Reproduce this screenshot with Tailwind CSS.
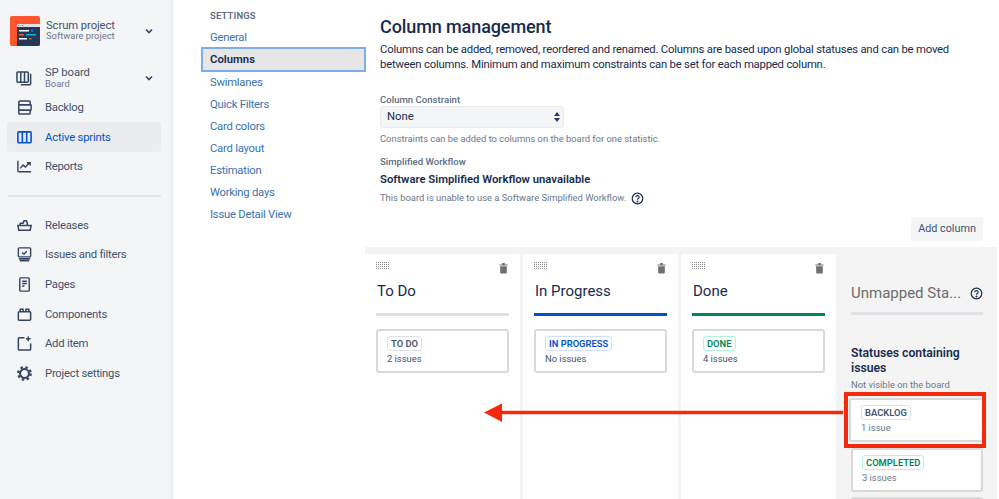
<!DOCTYPE html>
<html><head><meta charset="utf-8"><script src="https://cdn.jsdelivr.net/npm/@tailwindcss/browser@4"></script></head>
<body class="m-0 bg-white">
<div class="relative flex w-[999px] h-[499px] overflow-hidden bg-white font-['Roboto',sans-serif] text-[#172b4d] antialiased">
  <aside class="w-[173px] shrink-0 bg-[#f4f5f7] border-r-2 border-[#ebecf0] flex flex-col pl-[7px] pr-[10px]">
    <div class="flex items-center h-[31px] mt-[15px] pl-[3px]">
      <svg class="w-[30px] h-[30px] shrink-0 rounded-[2px]" viewBox="0 0 30 30"><rect width="30" height="30" fill="#ff5630"/><rect x="7" y="8" width="23" height="22" fill="#253858"/><rect x="7" y="8" width="23" height="3" fill="#dfe1e6"/><rect x="8" y="9" width="1.5" height="1" fill="#ff5630"/><rect x="10" y="9" width="1.5" height="1" fill="#ffc400"/><rect x="12" y="9" width="1.5" height="1" fill="#00b8d9"/><rect x="9" y="14" width="10" height="1.5" fill="#fff"/><rect x="21" y="14" width="2" height="1.5" fill="#2684ff"/><rect x="9" y="18" width="5" height="1.5" fill="#ff5630"/><rect x="16" y="18" width="10" height="1.5" fill="#00b8d9"/><rect x="9" y="22" width="8" height="1.5" fill="#fff"/><rect x="19" y="22" width="2.5" height="1.5" fill="#ff5630"/></svg>
      <div class="ml-[6px] flex-1"><div class="text-[11.3px] tracking-[-0.1px] leading-[11.5px] text-[#42526e]">Scrum project</div><div class="text-[9.4px] leading-[10px] text-[#6b778c]">Software project</div></div>
      <svg class="w-[10px] h-[10px] mr-[7px]" viewBox="0 0 10 10" fill="none" stroke="#344563" stroke-width="1.6"><path d="M2 3.5l3 3 3-3"/></svg>
    </div>
    <div class="flex items-center h-[28px] mt-[18px] pl-[9px]">
      <svg class="w-[17px] h-[17px] shrink-0" viewBox="0 0 18 18" fill="none" stroke="#344563" stroke-width="1.6"><rect x="1" y="2" width="12" height="11" rx="1"/><path d="M5 2v11M9 2v11M15.5 4v10.5a1 1 0 0 1-1 1H5"/></svg>
      <div class="ml-[12px] flex-1"><div class="text-[11.3px] tracking-[-0.1px] leading-[12px] text-[#42526e]">SP board</div><div class="text-[9.4px] leading-[10px] text-[#6b778c]">Board</div></div>
      <svg class="w-[10px] h-[10px] mr-[7px]" viewBox="0 0 10 10" fill="none" stroke="#344563" stroke-width="1.6"><path d="M2 3.5l3 3 3-3"/></svg>
    </div>
    <a class="flex items-center h-[30px] pl-[9px] text-[11.3px] tracking-[-0.25px] text-[#42526e]"><svg class="w-[17px] h-[17px] shrink-0 mr-[12px]" viewBox="0 0 18 18" fill="none" stroke="#344563" stroke-width="1.6"><rect x="3" y="2" width="12" height="4" rx="1"/><rect x="3" y="12" width="12" height="4" rx="1"/><path d="M3 6h12.5a.5.5 0 0 1 .5.5v5a.5.5 0 0 1-.5.5H3z"/></svg><span class="pt-[2px]">Backlog</span></a>
    <a class="flex items-center h-[30px] pl-[9px] text-[11.3px] tracking-[-0.2px] text-[#0052cc] bg-[#ebecf0] rounded-[3px]"><svg class="w-[17px] h-[17px] shrink-0 mr-[12px]" viewBox="0 0 18 18" fill="none" stroke="#0052cc" stroke-width="1.7"><rect x="2" y="3" width="14" height="11.5" rx="1"/><path d="M6.7 3v11.5M11.3 3v11.5"/></svg><span class="pt-[2px]">Active sprints</span></a>
    <a class="flex items-center h-[29px] pl-[9px] text-[11.3px] tracking-[-0.25px] text-[#42526e]"><svg class="w-[17px] h-[17px] shrink-0 mr-[12px]" viewBox="0 0 18 18" fill="none" stroke="#344563" stroke-width="1.5"><path d="M2 3v10.5a1 1 0 0 0 1 1h13"/><path d="M4.5 11l3-3.5 2.5 2 4.5-4.5M11.5 5H15v3"/></svg><span class="pt-[2px]">Reports</span></a>
    <div class="h-[2px] bg-[#e4e6eb] mt-[14px] mb-[13.5px] ml-[1px]"></div>
    <a class="flex items-center h-[29.6px] pl-[9px] text-[11.3px] tracking-[-0.25px] text-[#42526e]"><svg class="w-[17px] h-[17px] shrink-0 mr-[12px]" viewBox="0 0 18 18" fill="none" stroke="#344563" stroke-width="1.6"><path d="M2 9h14l-1 5H3zM4.5 9V6.5h3L8.5 4H11l1 2.5v2.5"/></svg><span class="pt-[2px]">Releases</span></a>
    <a class="flex items-center h-[29.6px] pl-[9px] text-[11.3px] tracking-[-0.25px] text-[#42526e]"><svg class="w-[17px] h-[17px] shrink-0 mr-[12px]" viewBox="0 0 18 18" fill="none" stroke="#344563" stroke-width="1.5"><rect x="2.5" y="2" width="13" height="9.5" rx="1"/><path d="M6.5 7l2 1.5 3-3"/><path d="M3 13.5h12M4 15.5h10" stroke-width="1.7"/></svg><span class="pt-[2px]">Issues and filters</span></a>
    <a class="flex items-center h-[29.6px] pl-[9px] text-[11.3px] tracking-[-0.25px] text-[#42526e]"><svg class="w-[17px] h-[17px] shrink-0 mr-[12px]" viewBox="0 0 18 18" fill="none" stroke="#344563" stroke-width="1.5"><rect x="4" y="2" width="10" height="14" rx="1"/><path d="M6.5 5.5h5M6.5 8h5M6.5 10.5h2.5"/></svg><span class="pt-[2px]">Pages</span></a>
    <a class="flex items-center h-[29.6px] pl-[9px] text-[11.3px] tracking-[-0.25px] text-[#42526e]"><svg class="w-[17px] h-[17px] shrink-0 mr-[12px]" viewBox="0 0 18 18" fill="none" stroke="#344563" stroke-width="1.6"><rect x="2.5" y="6" width="13" height="9" rx="1"/><path d="M4.5 6V3.5h3V6M10.5 6V3.5h3V6"/></svg><span class="pt-[2px]">Components</span></a>
    <a class="flex items-center h-[29.6px] pl-[9px] text-[11.3px] tracking-[-0.25px] text-[#42526e]"><svg class="w-[17px] h-[17px] shrink-0 mr-[12px]" viewBox="0 0 18 18" fill="none" stroke="#344563" stroke-width="1.6"><path d="M9 3H3.5a1 1 0 0 0-1 1v11a1 1 0 0 0 1 1h11a1 1 0 0 0 1-1V9"/><path d="M13 1.5v5M10.5 4h5"/></svg><span class="pt-[2px]">Add item</span></a>
    <a class="flex items-center h-[29.6px] pl-[9px] text-[11.3px] tracking-[-0.25px] text-[#42526e]"><svg class="w-[17px] h-[17px] shrink-0 mr-[12px]" viewBox="0 0 18 18" fill="none" stroke="#344563"><circle cx="9" cy="9" r="4.7" stroke-width="2.2"/><circle cx="9" cy="9" r="6.6" stroke-width="2.4" stroke-dasharray="2.6 2.6"/></svg><span class="pt-[2px]">Project settings</span></a>
  </aside>

  <nav class="w-[192px] shrink-0 pl-[37px] pt-[10px] text-[11.3px]">
    <div class="text-[9.4px] font-semibold tracking-[0.2px] text-[#5e6c84] leading-[12px]">SETTINGS</div>
    <a class="block text-[#3b73af] tracking-[-0.25px] h-[22px] leading-[24px] mt-[4px]">General</a>
    <a class="block font-semibold text-[#172b4d] bg-[#e6e6e6] border-2 border-[#7daee8] h-[25px] leading-[21px] -ml-[9px] pl-[7px] w-[165px] -my-[1px]">Columns</a>
    <a class="block text-[#3b73af] tracking-[-0.25px] h-[22px] leading-[23px]">Swimlanes</a>
    <a class="block text-[#3b73af] tracking-[-0.25px] h-[22px] leading-[23px]">Quick Filters</a>
    <a class="block text-[#3b73af] tracking-[-0.25px] h-[22px] leading-[24px]">Card colors</a>
    <a class="block text-[#3b73af] tracking-[-0.25px] h-[22px] leading-[24px]">Card layout</a>
    <a class="block text-[#3b73af] tracking-[-0.25px] h-[22px] leading-[24px]">Estimation</a>
    <a class="block text-[#3b73af] tracking-[-0.25px] h-[22px] leading-[24px]">Working days</a>
    <a class="block text-[#3b73af] tracking-[-0.25px] h-[22px] leading-[24px]">Issue Detail View</a>
  </nav>

  <main class="w-[632px] shrink-0 flex flex-col">
    <div class="pl-[15px] pr-[14px] pt-[15px] h-[247px] shrink-0">
      <h1 class="text-[18px] tracking-[-0.1px] leading-[24px] font-medium text-[#172b4d]">Column management</h1>
      <p class="text-[11.3px] tracking-[-0.2px] leading-[15px] mt-[3px] text-[#172b4d] w-[590px]">Columns can be added, removed, reordered and renamed. Columns are based upon global statuses and can be moved between columns. Minimum and maximum constraints can be set for each mapped column.</p>
      <div class="text-[9.6px] leading-[12px] font-medium text-[#5e6c84] mt-[22px]">Column Constraint</div>
      <div class="flex items-center justify-between w-[184px] h-[22px] bg-[#f4f5f7] border border-[#ebecf0] rounded-[3px] pl-[6px] pr-[2px] text-[11.3px]">None<svg class="w-[8px] h-[12px]" viewBox="0 0 8 12" fill="#253858"><path d="M4 1l3 4H1zM4 11l3-4H1z"/></svg></div>
      <div class="text-[9.4px] leading-[12px] text-[#6b778c] mt-[5px]">Constraints can be added to columns on the board for one statistic.</div>
      <div class="text-[9.6px] leading-[12px] font-medium text-[#5e6c84] mt-[11px]">Simplified Workflow</div>
      <div class="text-[11.3px] leading-[14px] font-semibold mt-[5px]">Software Simplified Workflow unavailable</div>
      <div class="flex items-center text-[9.4px] leading-[14px] text-[#6b778c] mt-[4px]">This board is unable to use a Software Simplified Workflow.<svg class="ml-[5px] w-[13px] h-[13px]" viewBox="0 0 13 13" fill="none" stroke="#172b4d" stroke-width="1.2"><circle cx="6.5" cy="6.5" r="5.3"/><path d="M4.9 5.2a1.6 1.6 0 1 1 2.4 1.4c-.5.3-.8.6-.8 1.2"/><circle cx="6.5" cy="9.6" r=".4"/></svg></div>
      <div class="flex justify-end mt-[12px]"><button class="h-[24px] w-[72px] bg-[#f4f5f7] rounded-[3px] text-[10.8px] text-[#42526e]">Add column</button></div>
    </div>
    <div class="flex-1 bg-[#f4f4f4] pt-[7px] flex gap-[3px] overflow-hidden">
      <section class="w-[155px] bg-white rounded-t-[2px] px-[11px] shrink-0">
        <div class="flex justify-between h-[32px] pt-[8px]"><svg width="14" height="8" viewBox="0 0 14 8"><path fill="#888" d="M0 0h1v1H0zM2 0h1v1H2zM4 0h1v1H4zM6 0h1v1H6zM8 0h1v1H8zM10 0h1v1h-1zM12 0h1v1h-1zM0 2h1v1H0zM2 2h1v1H2zM4 2h1v1H4zM6 2h1v1H6zM8 2h1v1H8zM10 2h1v1h-1zM12 2h1v1h-1zM0 4h1v1H0zM2 4h1v1H2zM4 4h1v1H4zM6 4h1v1H6zM8 4h1v1H8zM10 4h1v1h-1zM12 4h1v1h-1zM0 6h1v1H0zM2 6h1v1H2zM4 6h1v1H4zM6 6h1v1H6zM8 6h1v1H8zM10 6h1v1h-1zM12 6h1v1h-1z"/></svg><svg class="w-[9px] h-[12px] mr-[1px]" viewBox="0 0 10 12" fill="#707070"><path d="M0.5 2h9v1.2h-9zM3.5 0.5h3V2h-3zM1.3 4h7.4v7a1 1 0 0 1-1 1H2.3a1 1 0 0 1-1-1z"/></svg></div>
        <h2 class="text-[15px] leading-[22px] -mt-[6px] pl-[1px]">To Do</h2>
        <div class="h-[3px] bg-[#dfe1e6] mt-[11px]"></div>
        <div class="mt-[13px] h-[44px] border-2 border-[#d9d9d9] rounded-[3px] bg-white pl-[9px] pt-[5px]">
          <span class="block w-fit h-[15px] leading-[13px] px-[3px] border border-[#dfe1e6] rounded-[3px] text-[9.4px] font-semibold text-[#42526e]">TO DO</span>
          <div class="text-[9.4px] leading-[12px] mt-[2px] text-[#42526e]">2 issues</div>
        </div>
      </section>
      <section class="w-[155px] bg-white rounded-t-[2px] px-[11px] shrink-0">
        <div class="flex justify-between h-[32px] pt-[8px]"><svg width="14" height="8" viewBox="0 0 14 8"><path fill="#888" d="M0 0h1v1H0zM2 0h1v1H2zM4 0h1v1H4zM6 0h1v1H6zM8 0h1v1H8zM10 0h1v1h-1zM12 0h1v1h-1zM0 2h1v1H0zM2 2h1v1H2zM4 2h1v1H4zM6 2h1v1H6zM8 2h1v1H8zM10 2h1v1h-1zM12 2h1v1h-1zM0 4h1v1H0zM2 4h1v1H2zM4 4h1v1H4zM6 4h1v1H6zM8 4h1v1H8zM10 4h1v1h-1zM12 4h1v1h-1zM0 6h1v1H0zM2 6h1v1H2zM4 6h1v1H4zM6 6h1v1H6zM8 6h1v1H8zM10 6h1v1h-1zM12 6h1v1h-1z"/></svg><svg class="w-[9px] h-[12px] mr-[1px]" viewBox="0 0 10 12" fill="#707070"><path d="M0.5 2h9v1.2h-9zM3.5 0.5h3V2h-3zM1.3 4h7.4v7a1 1 0 0 1-1 1H2.3a1 1 0 0 1-1-1z"/></svg></div>
        <h2 class="text-[15px] leading-[22px] -mt-[6px] pl-[1px]">In Progress</h2>
        <div class="h-[3px] bg-[#0052cc] mt-[11px]"></div>
        <div class="mt-[13px] h-[44px] border-2 border-[#d9d9d9] rounded-[3px] bg-white pl-[9px] pt-[5px]">
          <span class="block w-fit h-[15px] leading-[13px] px-[3px] border border-[#cfe0ff] rounded-[3px] text-[9.4px] font-semibold text-[#0052cc]">IN PROGRESS</span>
          <div class="text-[9.4px] leading-[12px] mt-[2px] text-[#42526e]">No issues</div>
        </div>
      </section>
      <section class="w-[155px] bg-white rounded-t-[2px] px-[11px] shrink-0">
        <div class="flex justify-between h-[32px] pt-[8px]"><svg width="14" height="8" viewBox="0 0 14 8"><path fill="#888" d="M0 0h1v1H0zM2 0h1v1H2zM4 0h1v1H4zM6 0h1v1H6zM8 0h1v1H8zM10 0h1v1h-1zM12 0h1v1h-1zM0 2h1v1H0zM2 2h1v1H2zM4 2h1v1H4zM6 2h1v1H6zM8 2h1v1H8zM10 2h1v1h-1zM12 2h1v1h-1zM0 4h1v1H0zM2 4h1v1H2zM4 4h1v1H4zM6 4h1v1H6zM8 4h1v1H8zM10 4h1v1h-1zM12 4h1v1h-1zM0 6h1v1H0zM2 6h1v1H2zM4 6h1v1H4zM6 6h1v1H6zM8 6h1v1H8zM10 6h1v1h-1zM12 6h1v1h-1z"/></svg><svg class="w-[9px] h-[12px] mr-[1px]" viewBox="0 0 10 12" fill="#707070"><path d="M0.5 2h9v1.2h-9zM3.5 0.5h3V2h-3zM1.3 4h7.4v7a1 1 0 0 1-1 1H2.3a1 1 0 0 1-1-1z"/></svg></div>
        <h2 class="text-[15px] leading-[22px] -mt-[6px] pl-[1px]">Done</h2>
        <div class="h-[3px] bg-[#00875a] mt-[11px]"></div>
        <div class="mt-[13px] h-[44px] border-2 border-[#d9d9d9] rounded-[3px] bg-white pl-[9px] pt-[5px]">
          <span class="block w-fit h-[15px] leading-[13px] px-[3px] border border-[#b3f5d9] rounded-[3px] text-[9.4px] font-semibold text-[#00875a]">DONE</span>
          <div class="text-[9.4px] leading-[12px] mt-[2px] text-[#42526e]">4 issues</div>
        </div>
      </section>
      <section class="flex-1 min-w-0 pl-[12px] pr-[14px]">
        <div class="flex items-center justify-between mt-[29px] h-[20px]"><span class="text-[15px] text-[#6b6b6b] whitespace-nowrap">Unmapped Sta...</span><svg class="w-[13px] h-[13px]" viewBox="0 0 13 13" fill="none" stroke="#172b4d" stroke-width="1.2"><circle cx="6.5" cy="6.5" r="5.3"/><path d="M4.9 5.2a1.6 1.6 0 1 1 2.4 1.4c-.5.3-.8.6-.8 1.2"/><circle cx="6.5" cy="9.6" r=".4"/></svg></div>
        <div class="h-[3px] bg-[#dfe1e6] mt-[9px]"></div>
        <h3 class="text-[12.2px] leading-[15px] font-semibold mt-[31px] whitespace-nowrap">Statuses containing<br>issues</h3>
        <div class="text-[9.4px] leading-[12px] text-[#6b778c] mt-[2.5px]">Not visible on the board</div>
        <div class="mt-[7px] -ml-[2px] h-[44px] border-2 border-[#d9d9d9] rounded-[3px] bg-white pl-[10px] pt-[5px] w-[135px]">
          <span class="block w-fit h-[15px] leading-[13px] px-[3px] border border-[#dfe1e6] rounded-[3px] text-[9.4px] font-semibold text-[#42526e]">BACKLOG</span>
          <div class="text-[9.4px] leading-[12px] mt-[2px] text-[#6b778c]">1 issue</div>
        </div>
        <div class="mt-[6px] h-[44px] border-2 border-[#d9d9d9] rounded-[3px] bg-white pl-[9px] pt-[5px]">
          <span class="block w-fit h-[15px] leading-[13px] px-[3px] border border-[#b3f5d9] rounded-[3px] text-[9.4px] font-semibold text-[#00875a]">COMPLETED</span>
          <div class="text-[9.4px] leading-[12px] mt-[2px] text-[#6b778c]">3 issues</div>
        </div>
        <div class="mt-[5px] h-[20px] border-2 border-[#d9d9d9] rounded-[3px] bg-white"></div>
      </section>
    </div>
  </main>

  <div class="absolute left-[844px] top-[392px] w-[142px] h-[56px] border-[4px] border-[#f52a0c]"></div>
  <svg class="absolute left-[483px] top-[401px]" width="360" height="24" viewBox="0 0 360 24"><path d="M18 11.5H360" stroke="#f52a0c" stroke-width="3.5"/><path d="M1 11.5L19 2.5V21z" fill="#f52a0c"/></svg>
</div>
</body></html>
